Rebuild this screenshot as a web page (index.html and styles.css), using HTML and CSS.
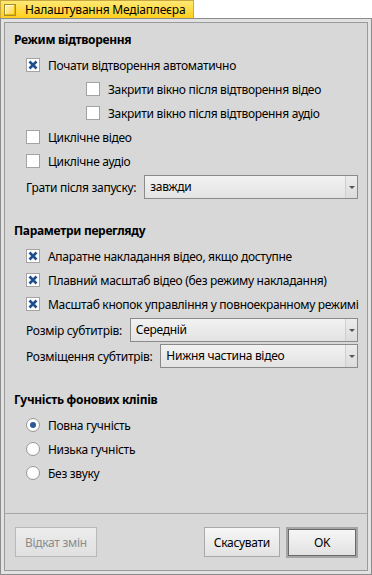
FILE: index.html
```html
<!DOCTYPE html>
<html lang="uk">
<head>
    <meta charset="UTF-8">
    <title>Налаштування Медіаплеєра</title>
    <link rel="stylesheet" href="styles.css">
</head>
<body>
    <div class="tab">
        <span class="close-box"></span>
        <span class="tab-title">Налаштування Медіаплеєра</span>
    </div>

    <div class="window">
        <div class="panel">
            <div class="content">
                <section class="group">
                    <h2 class="group-title">Режим відтворення</h2>
                    <label class="check"><span class="box checked"><svg viewBox="0 0 12 12"><path d="M2.5 2.5L9.5 9.5M9.5 2.5L2.5 9.5"/></svg></span>Почати відтворення автоматично</label>
                    <label class="check sub"><span class="box"></span>Закрити вікно після відтворення відео</label>
                    <label class="check sub"><span class="box"></span>Закрити вікно після відтворення аудіо</label>
                    <label class="check"><span class="box"></span>Циклічне відео</label>
                    <label class="check"><span class="box"></span>Циклічне аудіо</label>
                    <div class="field">
                        <span class="field-label">Грати після запуску:</span>
                        <div class="popup"><span class="popup-value">завжди</span><span class="popup-arrow"></span></div>
                    </div>
                </section>

                <section class="group">
                    <h2 class="group-title">Параметри перегляду</h2>
                    <label class="check"><span class="box checked"><svg viewBox="0 0 12 12"><path d="M2.5 2.5L9.5 9.5M9.5 2.5L2.5 9.5"/></svg></span>Апаратне накладання відео, якщо доступне</label>
                    <label class="check"><span class="box checked"><svg viewBox="0 0 12 12"><path d="M2.5 2.5L9.5 9.5M9.5 2.5L2.5 9.5"/></svg></span>Плавний масштаб відео (без режиму накладання)</label>
                    <label class="check"><span class="box checked"><svg viewBox="0 0 12 12"><path d="M2.5 2.5L9.5 9.5M9.5 2.5L2.5 9.5"/></svg></span>Масштаб кнопок управління у повноекранному режимі</label>
                    <div class="field">
                        <span class="field-label">Розмір субтитрів:</span>
                        <div class="popup"><span class="popup-value">Середній</span><span class="popup-arrow"></span></div>
                    </div>
                    <div class="field">
                        <span class="field-label">Розміщення субтитрів:</span>
                        <div class="popup"><span class="popup-value">Нижня частина відео</span><span class="popup-arrow"></span></div>
                    </div>
                </section>

                <section class="group">
                    <h2 class="group-title">Гучність фонових кліпів</h2>
                    <label class="check"><span class="radio selected"></span>Повна гучність</label>
                    <label class="check"><span class="radio"></span>Низька гучність</label>
                    <label class="check"><span class="radio"></span>Без звуку</label>
                </section>
            </div>

            <div class="buttons">
                <button class="btn" disabled>Відкат змін</button>
                <span class="spacer"></span>
                <button class="btn">Скасувати</button>
                <span class="default-frame"><button class="btn">OK</button></span>
            </div>
        </div>
    </div>
</body>
</html>
```

FILE: styles.css
```css
* {
    margin: 0;
    padding: 0;
    box-sizing: border-box;
}

body {
    font-family: 'Noto Sans', 'DejaVu Sans', sans-serif;
    font-size: 12px;
    letter-spacing: -0.3px;
    color: #000;
    background: #fff;
}

/* yellow window tab */
.tab {
    width: 194px;
    height: 18px;
    display: flex;
    align-items: center;
    gap: 9px;
    padding-left: 3px;
    background: linear-gradient(#ffe974, #ffcf1c);
    border: 1px solid #c9a93c;
    border-bottom: none;
}

.close-box {
    width: 12px;
    height: 12px;
    border: 1px solid #a88d2c;
    background: linear-gradient(135deg, #fff6c4, #ffd53a);
    box-shadow: inset -1px -1px 0 #e8b800, inset 1px 1px 0 #fffbe0;
}

.tab-title {
    line-height: 16px;
    letter-spacing: -0.2px;
}

/* window frame */
.window {
    height: 557px;
    border: 1px solid #8c8c8c;
    padding: 3px;
    background: #e2e2e2;
}

.panel {
    height: 100%;
    border: 1px solid #9b9b9b;
    background: #d8d8d8;
    display: flex;
    flex-direction: column;
}

.content {
    flex: 1;
    padding: 7px 9px 0 9px;
}

.group + .group {
    margin-top: 22px;
}

.group-title {
    font-size: 12px;
    font-weight: bold;
    line-height: 20px;
    margin-bottom: 3px;
}

.check {
    height: 24px;
    display: flex;
    align-items: center;
    gap: 8px;
    margin-left: 12px;
    white-space: nowrap;
}

.check.sub {
    margin-left: 72px;
}

.box {
    width: 14px;
    height: 14px;
    background: #fff;
    border: 1px solid #a3a3a3;
    display: flex;
    align-items: center;
    justify-content: center;
}

.box svg {
    width: 12px;
    height: 12px;
}

.box svg path {
    stroke: #1d4f8e;
    stroke-width: 2.6;
    fill: none;
}

.radio {
    width: 14px;
    height: 14px;
    border-radius: 50%;
    border: 1px solid #9a9a9a;
    background: radial-gradient(circle at 40% 35%, #fff 55%, #ececec);
    display: flex;
    align-items: center;
    justify-content: center;
}

.radio.selected::after {
    content: "";
    width: 6px;
    height: 6px;
    border-radius: 50%;
    background: #2a5a96;
}

/* label + popup menu */
.field {
    display: flex;
    align-items: center;
    gap: 8px;
    margin: 2px 0 0 12px;
    height: 24px;
    white-space: nowrap;
}

.popup {
    flex: 1;
    height: 24px;
    display: flex;
    border: 1px solid #8a8a8a;
    background: linear-gradient(#f2f2f2, #e3e3e3);
}

.popup-value {
    flex: 1;
    padding-left: 5px;
    line-height: 22px;
}

.popup-arrow {
    width: 12px;
    border-left: 1px solid #cfcfcf;
    background: linear-gradient(#ececec, #dcdcdc);
    display: flex;
    align-items: center;
    justify-content: center;
}

.popup-arrow::after {
    content: "";
    border-left: 3px solid transparent;
    border-right: 3px solid transparent;
    border-top: 3px solid #555;
}

/* button bar */
.buttons {
    height: 57px;
    border-top: 1px solid #a6a6a6;
    display: flex;
    align-items: center;
    gap: 6px;
    padding: 0 9px 0 10px;
}

.spacer {
    flex: 1;
}

.btn {
    font-family: inherit;
    font-size: 12px;
    letter-spacing: inherit;
    color: #000;
    height: 30px;
    min-width: 68px;
    padding: 0 9px;
    border: 1px solid #a9a9a9;
    background: linear-gradient(#f6f6f6, #e2e2e2);
}

.btn:disabled {
    color: #8c8c8c;
    background: linear-gradient(#ececec, #e0e0e0);
    border-color: #b8b8b8;
}

.default-frame {
    display: flex;
    padding: 2px;
    background: #a5a5a5;
}

.default-frame .btn {
    height: 27px;
    border-color: #6a6a6a;
}
```
